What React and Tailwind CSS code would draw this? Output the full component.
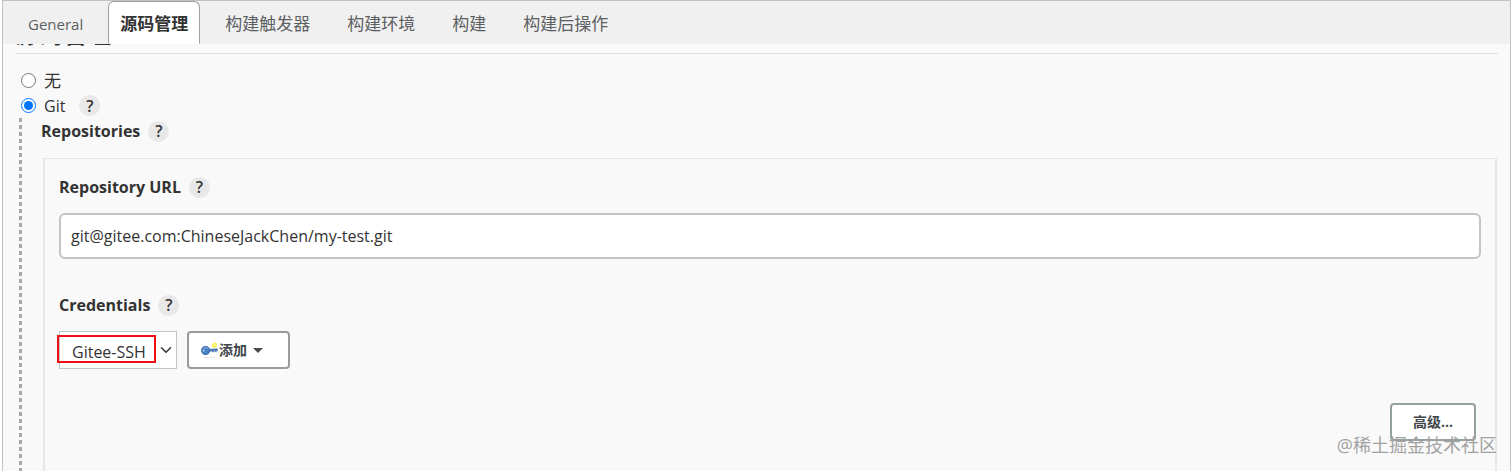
import { useState } from "react";
import { ChevronDown } from "lucide-react";

const tabs = ["General", "源码管理", "构建触发器", "构建环境", "构建", "构建后操作"];

function HelpButton({ topic }) {
  return (
    <button
      type="button"
      aria-label={`Help for ${topic}`}
      className="flex h-[21px] w-[21px] shrink-0 items-center justify-center rounded-full bg-[#e8e8e8] text-base leading-5 font-semibold text-[#333333]"
    >
      ?
    </button>
  );
}

function KeyIcon() {
  return (
    <svg className="h-[17px] w-[17px] shrink-0" viewBox="0 0 17 17" fill="none">
      <path d="M13.500 0l1 1.300 1.700.1-.5 1.600.8 1.500-1.600.5-1.200 1.200-1.300-1-1.700-.2.500-1.600-.6-1.500 1.700-.4z" fill="#f8ef4e" />
      <circle cx="13.600" cy="3.200" r="1" fill="#fffbc4" />
      <path d="M7.500 7.300l9-.5v1.900h-1.200v1.100h-1.100V8.800h-1.600V10h-1.100V9.100l-4 .3z" fill="#4f7fbd" stroke="#38659f" strokeWidth="0.500" />
      <ellipse cx="4.600" cy="8.500" rx="3.900" ry="4.100" fill="#4a80c6" stroke="#315f9f" strokeWidth="0.900" />
      <path d="M2.300 6.600c1.200-1.200 3.400-1.200 4.600-.2" stroke="#8fb5e5" strokeWidth="0.900" />
      <ellipse cx="2.800" cy="8.700" rx="0.800" ry="1.100" fill="#b9d0ec" />
      <path d="M3 15.500h11" stroke="#dedede" strokeWidth="1" strokeDasharray="2 1" />
    </svg>
  );
}

export default function App() {
  const [activeTab, setActiveTab] = useState("源码管理");
  const [scm, setScm] = useState("git");
  const [url, setUrl] = useState("git@gitee.com:ChineseJackChen/my-test.git");

  return (
    <div className="relative flex min-h-screen flex-col pr-px pl-0.5 font-['Open_Sans','Noto_Sans_CJK_SC',sans-serif] text-base text-[#333333]">
      <div className="flex grow flex-col border-x border-t border-[#bfc3c4] bg-[#f9f9f9]">
        {/* Tabs */}
        <nav className="flex h-[43px] gap-[13px] bg-[#f0f0f0] pl-[13px]">
          {tabs.map((tab) => (
            <button
              key={tab}
              type="button"
              onClick={() => setActiveTab(tab)}
              className={`rounded-t-md border px-[11px] pt-0.5 leading-6 ${tab === "General" ? "text-[15px]" : "text-[17px]"} ${
                activeTab === tab
                  ? "border-[#9b9fa1] border-b-white bg-white font-bold"
                  : "border-transparent text-[#5c6063]"
              }`}
            >
              {tab}
            </button>
          ))}
        </nav>

        {/* Section title, scrolled under the tabs */}
        <div className="mr-3 ml-3 flex h-[10px] items-end overflow-hidden border-b border-[#dfe2e2]">
          <h2 className="shrink-0 text-2xl leading-[38px] font-bold">源码管理</h2>
        </div>

        <div className="flex flex-col pt-3.5 pl-[18px]">
          <label className="flex h-[25px] items-center gap-2">
            <input
              type="radio"
              name="scm"
              checked={scm === "none"}
              onChange={() => setScm("none")}
              className="h-[15px] w-[15px]"
            />
            <span className="text-[17px] leading-6">无</span>
          </label>
          <div className="flex h-[25px] items-center gap-3.5">
            <label className="flex items-center gap-2">
              <input
                type="radio"
                name="scm"
                checked={scm === "git"}
                onChange={() => setScm("git")}
                className="h-[15px] w-[15px]"
              />
              <span>Git</span>
            </label>
            <HelpButton topic="Git" />
          </div>
        </div>

        {/* Git settings */}
        <div className="mr-[13px] ml-4 flex grow">
          <div className="w-[3px] shrink-0 bg-[repeating-linear-gradient(to_bottom,#a8a8a8_0_4px,transparent_4px_7px)]" />
          <div className="flex grow flex-col pl-[19px]">
            <div className="flex h-[26px] items-center gap-2">
              <span className="font-bold">Repositories</span>
              <HelpButton topic="Repositories" />
            </div>

            <div className="mt-3.5 ml-0.5 flex grow flex-col border-x-2 border-t border-[#e6e8e8] px-3.5">
              <div className="mt-4 flex h-6 items-center gap-2">
                <label htmlFor="repo-url" className="font-bold">
                  Repository URL
                </label>
                <HelpButton topic="Repository URL" />
              </div>
              <input
                id="repo-url"
                type="text"
                value={url}
                onChange={(e) => setUrl(e.target.value)}
                className="mt-3.5 h-[46px] w-full rounded-md border-2 border-[#c2c6c6] bg-white px-2.5"
              />

              <div className="mt-[34px] flex h-6 items-center gap-2">
                <label htmlFor="credentials" className="font-bold">
                  Credentials
                </label>
                <HelpButton topic="Credentials" />
              </div>
              <div className="mt-3.5 flex gap-2.5">
                <div className="relative">
                  <select
                    id="credentials"
                    className="h-[38px] w-[118px] appearance-none border border-[#bfc6c6] bg-white pt-1 pl-3"
                  >
                    <option>Gitee-SSH</option>
                  </select>
                  <ChevronDown className="pointer-events-none absolute top-2.5 right-0.5 h-[18px] w-[18px]" strokeWidth={2} />
                  <div className="pointer-events-none absolute top-1 -left-0.5 h-7 w-[99px] border-2 border-[#f00f12]" />
                </div>
                <button
                  type="button"
                  className="flex h-[38px] w-[103px] items-center rounded border-2 border-[#989c9e] bg-white pl-3 text-sm font-bold text-[#41464a]"
                >
                  <KeyIcon />
                  <span className="ml-px">添加</span>
                  <svg className="ml-1.5 h-[5px] w-2.5" viewBox="0 0 10 5">
                    <path d="M0 0h10L5 5z" fill="#4a4a4a" />
                  </svg>
                </button>
              </div>

              <div className="mt-[34px] flex justify-end pr-[5px]">
                <button
                  type="button"
                  className="h-[38px] w-[86px] rounded border-2 border-[#93a09f] bg-white text-sm font-bold text-[#41464a]"
                >
                  高级...
                </button>
              </div>
            </div>
          </div>
        </div>
      </div>

      <span className="absolute right-[15px] bottom-3 text-lg leading-7 text-[#a2a2a2]">@稀土掘金技术社区</span>
    </div>
  );
}
